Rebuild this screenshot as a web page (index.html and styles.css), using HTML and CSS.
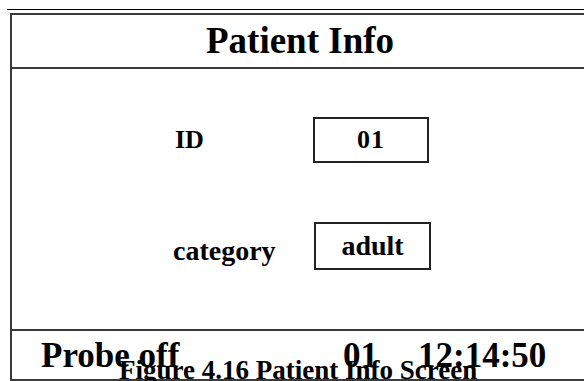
FILE: index.html
```html
<!DOCTYPE html>
<html lang="en">
<head>
    <meta charset="UTF-8">
    <meta name="viewport" content="width=device-width, initial-scale=1.0">
    <title>Patient Info</title>
    <link rel="stylesheet" href="styles.css">
</head>
<body>
    <div class="rule"></div>

    <div class="screen">
        <div class="screen-title">Patient Info</div>

        <div class="screen-body">
            <div class="field field-id">
                <span class="label">ID</span>
                <span class="value">01</span>
            </div>
            <div class="field field-cat">
                <span class="label">category</span>
                <span class="value">adult</span>
            </div>
        </div>

        <div class="screen-status">
            <span class="probe">Probe off</span>
            <span class="bed">01</span>
            <span class="clock">12:14:50</span>
        </div>
    </div>

    <div class="caption">Figure 4.16 Patient Info Screen</div>
</body>
</html>
```

FILE: styles.css
```css
body {
    margin: 0;
    width: 584px;
    height: 381px;
    overflow: hidden;
    position: relative;
    background: #fff;
    color: #000;
    font-family: "Liberation Serif", "Times New Roman", serif;
    font-weight: bold;
}

.rule {
    margin: 9px 0 0 7px;
    height: 1px;
    background: #000;
}

.screen {
    margin: 3px 0 0 10px;
    width: 576px;
    height: 364px;
    border: 2px solid #3a3a3a;
    display: flex;
    flex-direction: column;
}

.screen-title {
    height: 52px;
    line-height: 52px;
    text-align: center;
    font-size: 37px;
    border-bottom: 2px solid #3a3a3a;
}

.screen-body {
    height: 262px;
    border-bottom: 2px solid #3a3a3a;
    padding: 48px 0 0 161px;
    box-sizing: border-box;
    display: flex;
    flex-direction: column;
    gap: 59px;
}

.field {
    display: grid;
    grid-template-columns: 140px 116px;
    align-items: center;
}

.value {
    border: 2px solid #222;
    text-align: center;
}

.field-id .label,
.field-id .value {
    font-size: 26px;
}

.field-id .label {
    padding-left: 2px;
}

.field-id .value {
    height: 42px;
    line-height: 42px;
    letter-spacing: 1px;
}

.field-cat {
    grid-template-columns: 141px 117px;
}

.field-cat .label,
.field-cat .value {
    font-size: 28px;
}

.field-cat .label {
    padding-top: 10px;
}

.field-cat .value {
    height: 44px;
    line-height: 44px;
}

.screen-status {
    flex: 1;
    display: grid;
    grid-template-columns: 302px 75px auto;
    align-items: center;
    padding-left: 29px;
    font-size: 35px;
    line-height: 1;
}

.caption {
    position: absolute;
    left: 119px;
    top: 355px;
    font-size: 27px;
    white-space: nowrap;
}
```
